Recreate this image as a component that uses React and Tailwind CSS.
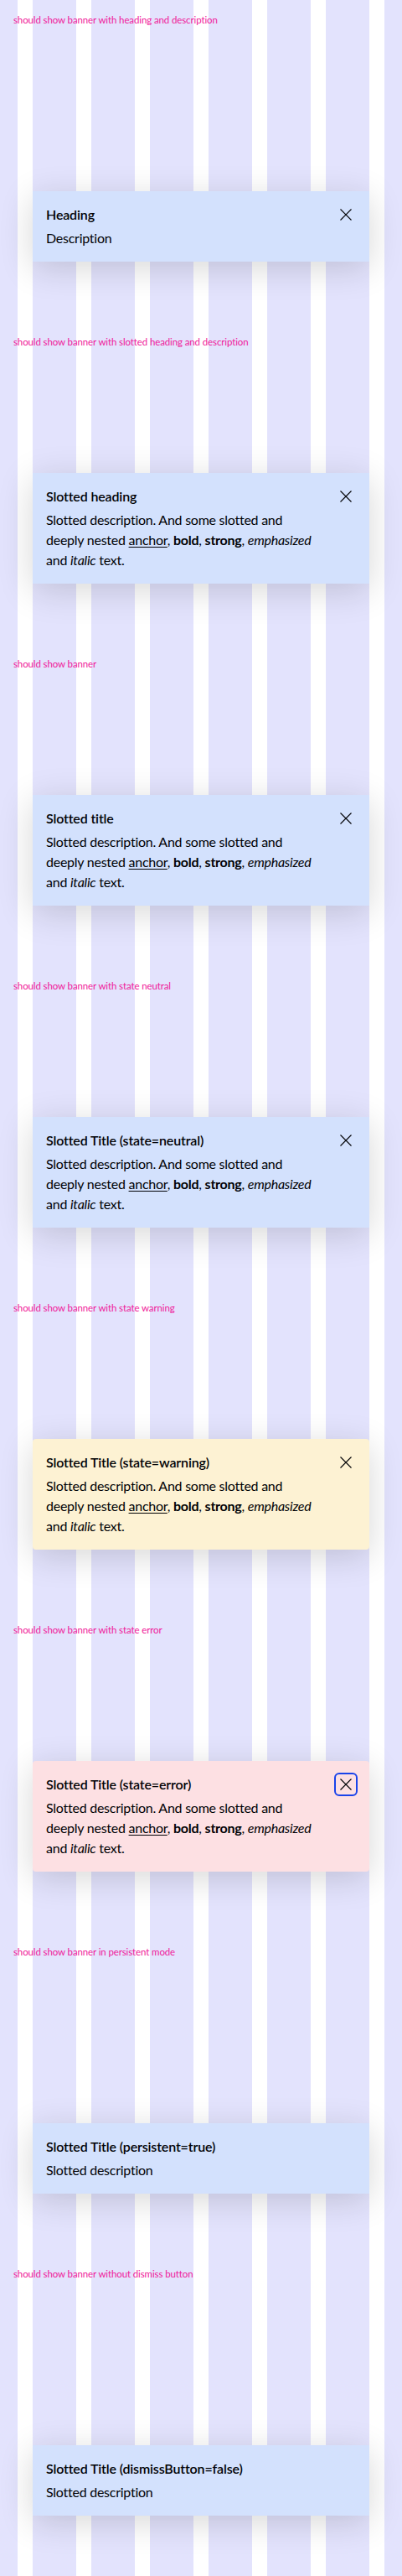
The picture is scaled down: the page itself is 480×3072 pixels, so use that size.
const stateBg = {
    neutral: 'bg-[#d3e1fd]',
    warning: 'bg-[#fdf2d3] rounded-[4px]',
    error: 'bg-[#fde0e3] rounded-[4px]',
};

const CloseIcon = () => (
    <svg viewBox='0 0 24 24' className='w-6 h-6' fill='none' stroke='#010205' strokeWidth='1.1'>
        <path d='M5.5 5.5l13 13M18.5 5.5l-13 13' />
    </svg>
);

const SlottedDescription = () => (
    <>
        Slotted description. And some slotted and deeply nested{' '}
        <a href='#' className='underline underline-offset-2 decoration-1'>anchor</a>,{' '}
        <b className='font-bold'>bold</b>, <strong className='font-bold'>strong</strong>,{' '}
        <em>emphasized</em> and <i>italic</i> text.
    </>
);

const Banner = ({ heading, description, state = 'neutral', dismissButton = true, focused = false }) => {
    return (
        <div className={`mx-[39px] flex items-start gap-4 p-4 text-[#010205] shadow-[0_8px_40px_rgba(0,0,0,0.16)] ${stateBg[state]}`}>
            <div className='flex-1 min-w-0 flex flex-col gap-1'>
                <h3 className='text-base leading-6 font-semibold tracking-[-0.15px]'>{heading}</h3>
                <p className='text-base leading-6 tracking-[-0.25px]'>{description}</p>
            </div>
            {
                dismissButton
                && <button
                    type='button'
                    aria-label='Close'
                    className={`shrink-0 w-6 h-6 flex items-center justify-center rounded-[4px] ${focused ? 'outline-2 outline-[#1a44ea]' : ''}`}
                >
                    <CloseIcon />
                </button>
            }
        </div>
    );
};

const sections = [
    { label: 'should show banner with heading and description', heading: 'Heading', description: 'Description' },
    { label: 'should show banner with slotted heading and description', heading: 'Slotted heading', description: <SlottedDescription /> },
    { label: 'should show banner', heading: 'Slotted title', description: <SlottedDescription /> },
    { label: 'should show banner with state neutral', heading: 'Slotted Title (state=neutral)', description: <SlottedDescription /> },
    { label: 'should show banner with state warning', heading: 'Slotted Title (state=warning)', description: <SlottedDescription />, state: 'warning' },
    { label: 'should show banner with state error', heading: 'Slotted Title (state=error)', description: <SlottedDescription />, state: 'error', focused: true },
    { label: 'should show banner in persistent mode', heading: 'Slotted Title (persistent=true)', description: 'Slotted description', dismissButton: false },
    { label: 'should show banner without dismiss button', heading: 'Slotted Title (dismissButton=false)', description: 'Slotted description', dismissButton: false },
];

export default function App() {
    return (
        <div className='min-h-screen font-["Lato",sans-serif] bg-[image:repeating-linear-gradient(90deg,#ffffff_0_18px,#e3e3fd_18px_70px)] bg-[position:21px_0]'>
            {sections.map(s => (
                <section key={s.label} className='h-[384px] flex flex-col justify-between pt-4 pb-[72px]'>
                    <p className='px-4 text-[11.5px] leading-4 tracking-[-0.12px] text-[#f0189a]'>{s.label}</p>
                    <Banner {...s} />
                </section>
            ))}
        </div>
    );
}
